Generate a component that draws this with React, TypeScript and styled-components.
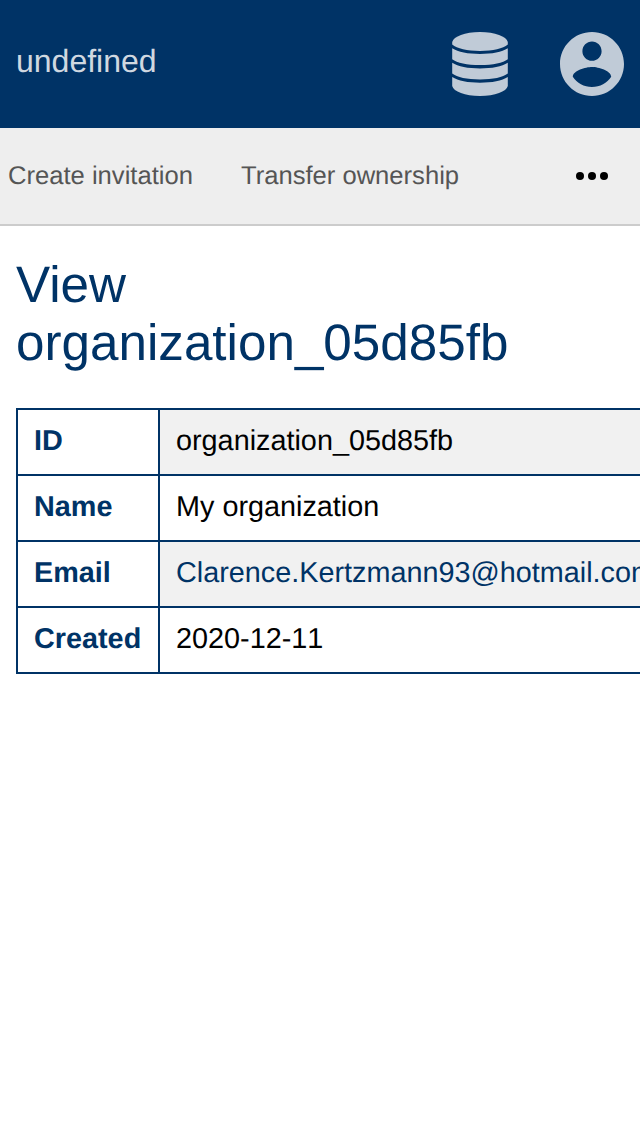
import React from 'react';
import styled, { createGlobalStyle } from 'styled-components';

const GlobalStyle = createGlobalStyle`
  * { box-sizing: border-box; }
  html, body { margin: 0; background: #fff; overflow-x: hidden; }
  body {
    font-family: "Liberation Sans", Arial, sans-serif;
    color: #000;
    text-rendering: geometricPrecision;
  }
`;

const Page = styled.div`
  width: 640px;
  height: 1136px;
  overflow: hidden;
`;

const Header = styled.header`
  display: flex;
  align-items: center;
  justify-content: space-between;
  height: 128px;
  padding: 0 16px;
  background: #003366;
`;

const Brand = styled.span`
  font-size: 32px;
  line-height: 36px;
  padding-bottom: 6px;
  color: #d0d8e0;
`;

const HeaderIcons = styled.div`
  display: flex;
  align-items: center;
  gap: 48px;
`;

const Icon = styled.svg`
  display: block;
  width: 64px;
  height: 64px;
  fill: #c0cbd7;
`;

const Toolbar = styled.nav`
  display: flex;
  align-items: center;
  height: 98px;
  padding: 0 32px 2px 8px;
  gap: 48px;
  background: #eee;
  border-bottom: 2px solid #ccc;
`;

const ToolbarLink = styled.a`
  padding-top: 2px;
  font-size: 25.6px;
  line-height: 30px;
  color: #555;
  white-space: nowrap;
`;

const MoreButton = styled.button`
  display: flex;
  gap: 4px;
  margin: 0 0 0 auto;
  padding: 2px 0 0;
  border: 0;
  background: none;
`;

const Dot = styled.i`
  width: 8px;
  height: 8px;
  border-radius: 50%;
  background: #000;
`;

const Content = styled.main`
  padding: 30px 16px;
`;

const Title = styled.h1`
  margin: 0 0 36px;
  font-size: 51.2px;
  line-height: 58px;
  font-weight: 400;
  color: #003366;
`;

const Table = styled.table`
  border-collapse: collapse;
  font-size: 28.8px;
  line-height: 32px;
  white-space: nowrap;
`;

const Row = styled.tr`
  height: 66px;
`;

const Label = styled.th`
  padding: 0 16px 3px;
  min-width: 142px;
  border: 2px solid #003366;
  color: #003366;
  text-align: left;
`;

const Value = styled.td<{ $shaded: boolean; $link?: boolean }>`
  padding: 0 16px 3px;
  border: 2px solid #003366;
  background: ${({ $shaded }) => ($shaded ? '#f1f1f1' : '#fff')};
  color: ${({ $link }) => ($link ? '#003366' : '#000')};
  font-kerning: none;
`;

const details = [
  { label: 'ID', value: 'organization_05d85fb' },
  { label: 'Name', value: 'My organization' },
  { label: 'Email', value: 'Clarence.Kertzmann93@hotmail.com', link: true },
  { label: 'Created', value: '2020-12-11' },
];

const DatabaseIcon = () => (
  <Icon viewBox="-4 0 64 64">
    <path d="M.2 10C1.5 4.5 13 0 28 0s26.500 4.500 27.800 10v2.500C51 16.500 41 18.900 28 18.900S5 16.500.2 12.500z" />
    <path d="M.2 16.200C6 20 16 21.900 28 21.900s22-1.900 27.800-5.700v11C51 31 41 33.100 28 33.100S5 31 .2 27.200z" />
    <path d="M.2 30.700C6 34.500 16 36.400 28 36.400s22-1.900 27.800-5.700v10.900C51 45.400 41 47.500 28 47.500S5 45.400.2 41.600z" />
    <path d="M.2 45.100C6 48.900 16 50.800 28 50.800s22-1.900 27.800-5.700V54C54.500 59.500 43 64 28 64S1.500 59.500.2 54z" />
  </Icon>
);

const AccountIcon = () => (
  <Icon viewBox="2 2 20 20">
    <path d="M12 2C6.480 2 2 6.480 2 12s4.480 10 10 10 10-4.480 10-10S17.520 2 12 2zm0 3c1.660 0 3 1.340 3 3s-1.340 3-3 3-3-1.340-3-3 1.340-3 3-3zm0 14.200c-2.500 0-4.710-1.280-6-3.220.03-1.990 4-3.080 6-3.080 1.990 0 5.970 1.090 6 3.080-1.290 1.940-3.500 3.220-6 3.220z" />
  </Icon>
);

export default function App() {
  return (
    <Page>
      <GlobalStyle />
      <Header>
        <Brand>undefined</Brand>
        <HeaderIcons>
          <DatabaseIcon />
          <AccountIcon />
        </HeaderIcons>
      </Header>
      <Toolbar>
        <ToolbarLink>Create invitation</ToolbarLink>
        <ToolbarLink>Transfer ownership</ToolbarLink>
        <MoreButton aria-label="More"><Dot /><Dot /><Dot /></MoreButton>
      </Toolbar>
      <Content>
        <Title>View<br />organization_05d85fb</Title>
        <Table>
          <tbody>
            {details.map((item, index) => (
              <Row key={item.label}>
                <Label>{item.label}</Label>
                <Value $shaded={index % 2 === 0} $link={item.link}>{item.value}</Value>
              </Row>
            ))}
          </tbody>
        </Table>
      </Content>
    </Page>
  );
}
